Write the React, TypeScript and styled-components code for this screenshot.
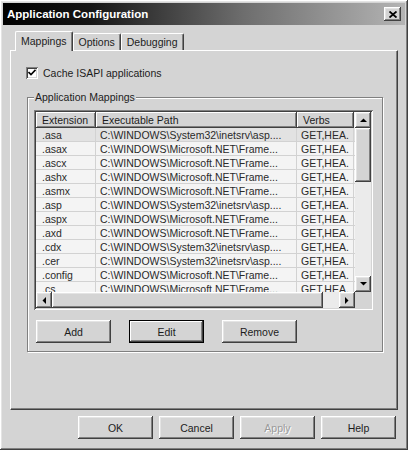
import React from 'react';
import styled, { createGlobalStyle, css } from 'styled-components';

const FACE = '#d4d4d4';

const GlobalStyle = createGlobalStyle`
  html, body {
    margin: 0;
    padding: 0;
    background: ${FACE};
  }
  body {
    font-family: "Liberation Sans", Arial, sans-serif;
    font-size: 10.5px;
    color: #1c1c1c;
  }
  * { box-sizing: border-box; }
`;

const raised = css`
  background: ${FACE};
  box-shadow: inset -1px -1px #404040, inset 1px 1px #ffffff,
    inset -2px -2px #808080, inset 2px 2px #e4e4e4;
`;

const Window = styled.div`
  width: 408px;
  height: 450px;
  padding: 3px;
  display: flex;
  flex-direction: column;
  ${raised};
`;

const TitleBar = styled.div`
  height: 22px;
  display: flex;
  align-items: center;
  padding: 0 4px 0 4px;
  background: linear-gradient(90deg, #000 0%, #161616 22%, #6e6e6e 60%, #b4b4b4 100%);
  color: #fff;
  font-weight: bold;
  font-size: 11.5px;
`;

const CloseButton = styled.div`
  margin-left: auto;
  width: 17px;
  height: 14px;
  display: flex;
  align-items: center;
  justify-content: center;
  ${raised};
`;

const Body = styled.div`
  padding: 6px 7px 0 7px;
  display: flex;
  flex-direction: column;
`;

const TabStrip = styled.div`
  height: 19px;
  display: flex;
  align-items: flex-end;
  padding-left: 5px;
  position: relative;
  z-index: 1;
`;

const Tab = styled.div<{ $active?: boolean }>`
  height: ${p => (p.$active ? 20 : 17)}px;
  margin-bottom: ${p => (p.$active ? -1 : 0)}px;
  padding: 0 ${p => (p.$active ? 5 : 5)}px;
  display: flex;
  align-items: center;
  padding-bottom: ${p => (p.$active ? 2 : 0)}px;
  background: ${FACE};
  border-top: 1px solid #fff;
  border-left: 1px solid #fff;
  border-right: 1px solid #404040;
  border-radius: 2px 2px 0 0;
  box-shadow: inset -1px 0 #808080;
`;

const Panel = styled.div`
  height: 360px;
  padding: 15px 14px 0 16px;
  border-top: 1px solid #fff;
  border-left: 1px solid #fff;
  border-right: 1px solid #404040;
  border-bottom: 1px solid #404040;
  box-shadow: inset -1px -1px #808080;
`;

const CheckRow = styled.label`
  display: flex;
  align-items: center;
  gap: 5px;
  height: 13px;
  margin-left: -1px;
`;

const CheckBox = styled.span`
  width: 12px;
  height: 12px;
  background: #fff;
  display: flex;
  align-items: center;
  justify-content: center;
  box-shadow: inset 1px 1px #808080, inset -1px -1px #fff,
    inset 2px 2px #404040, inset -2px -2px ${FACE};
`;

const Group = styled.fieldset`
  margin: 12px 0 0 0;
  padding: 7px 9px 8px 6px;
  border: 1px solid #808080;
  box-shadow: inset 1px 1px #fff, 1px 1px #fff;
`;

const GroupLabel = styled.legend`
  padding: 0 1px;
  background: ${FACE};
`;

const ListView = styled.div`
  height: 200px;
  padding: 2px;
  display: grid;
  grid-template-columns: 1fr 16px;
  grid-template-rows: 1fr 16px;
  background: #f4f4f4;
  box-shadow: inset 1px 1px #808080, inset -1px -1px #fff,
    inset 2px 2px #404040, inset -2px -2px ${FACE};
`;

const ListBody = styled.div`
  overflow: hidden;
`;

const COLS = '60px 201px 57px';

const HeaderRow = styled.div`
  display: grid;
  grid-template-columns: ${COLS};
  height: 16px;
`;

const HeaderCell = styled.div`
  padding-left: 6px;
  line-height: 16px;
  background: ${FACE};
  box-shadow: inset -1px -1px #404040, inset 1px 1px #ffffff, inset -2px -2px #808080;
`;

const Row = styled.div<{ $selected?: boolean }>`
  display: grid;
  grid-template-columns: ${COLS};
  height: 14px;
  border-bottom: 1px solid #d2d2d2;
  background: ${p => (p.$selected ? '#e2e2e2' : 'transparent')};
`;

const Cell = styled.div<{ $first?: boolean }>`
  padding-left: ${p => (p.$first ? 6 : 4)}px;
  line-height: 14px;
  white-space: nowrap;
  overflow: hidden;
  border-right: 1px solid #d2d2d2;
  color: #2a2a2a;
`;

const VScroll = styled.div`
  display: flex;
  flex-direction: column;
`;

const HScroll = styled.div`
  display: flex;
`;

const ScrollTrack = styled.div`
  flex: 1;
  background: #ebebeb;
`;

const ScrollButton = styled.div`
  width: 16px;
  height: 16px;
  flex: none;
  display: flex;
  align-items: center;
  justify-content: center;
  ${raised};
`;

const Thumb = styled.div<{ $size: number; $horizontal?: boolean }>`
  flex: none;
  ${p => (p.$horizontal ? `width: ${p.$size}px;` : `height: ${p.$size}px;`)}
  ${raised};
`;

const Corner = styled.div`
  background: ${FACE};
`;

const ButtonRow = styled.div`
  display: flex;
  gap: 18px;
  margin: 10px 0 0 2px;
`;

const Button = styled.div<{ $default?: boolean; $disabled?: boolean }>`
  width: 75px;
  height: 23px;
  display: flex;
  align-items: center;
  justify-content: center;
  ${raised};
  color: ${p => (p.$disabled ? '#9a9a9a' : '#1c1c1c')};
  text-shadow: ${p => (p.$disabled ? '1px 1px #fff' : 'none')};
  ${p =>
    p.$default &&
    css`
      box-shadow: inset 0 0 0 1px #000, inset -2px -2px #404040, inset 2px 2px #fff,
        inset -3px -3px #808080;
    `}
`;

const Footer = styled.div`
  display: flex;
  justify-content: flex-end;
  gap: 6px;
  margin-top: 6px;
  padding-right: 2px;
`;

const Arrow = ({ dir }: { dir: 'up' | 'down' | 'left' | 'right' }) => {
  const pts = {
    up: '0,4 7,4 3.5,0.5',
    down: '0,0 7,0 3.5,3.5',
    left: '4,0 4,7 0.5,3.5',
    right: '0,0 0,7 3.5,3.5',
  }[dir];
  const vertical = dir === 'up' || dir === 'down';
  return (
    <svg width={vertical ? 7 : 4} height={vertical ? 4 : 7} viewBox={vertical ? '0 0 7 4' : '0 0 4 7'}>
      <polygon points={pts} fill="#000" />
    </svg>
  );
};

const SYS = 'C:\\WINDOWS\\System32\\inetsrv\\asp....';
const NET = 'C:\\WINDOWS\\Microsoft.NET\\Frame...';

const mappings = [
  ['.asa', SYS],
  ['.asax', NET],
  ['.ascx', NET],
  ['.ashx', NET],
  ['.asmx', NET],
  ['.asp', SYS],
  ['.aspx', NET],
  ['.axd', NET],
  ['.cdx', SYS],
  ['.cer', SYS],
  ['.config', NET],
  ['.cs', NET],
];

export default function App() {
  return (
    <>
      <GlobalStyle />
      <Window>
        <TitleBar>
          Application Configuration
          <CloseButton>
            <svg width="8" height="7" viewBox="0 0 8 7">
              <path d="M0.5 0.5 L7.5 6.5 M7.5 0.5 L0.5 6.5" stroke="#000" strokeWidth="1.8" />
            </svg>
          </CloseButton>
        </TitleBar>
        <Body>
          <TabStrip>
            <Tab $active>Mappings</Tab>
            <Tab>Options</Tab>
            <Tab>Debugging</Tab>
          </TabStrip>
          <Panel>
            <CheckRow>
              <CheckBox>
                <svg width="8" height="7" viewBox="0 0 8 7">
                  <path d="M0.5 3 L3 5.5 L7.5 0.8" stroke="#000" strokeWidth="1.6" fill="none" />
                </svg>
              </CheckBox>
              Cache ISAPI applications
            </CheckRow>
            <Group>
              <GroupLabel>Application Mappings</GroupLabel>
              <ListView>
                <ListBody>
                  <HeaderRow>
                    <HeaderCell>Extension</HeaderCell>
                    <HeaderCell>Executable Path</HeaderCell>
                    <HeaderCell>Verbs</HeaderCell>
                  </HeaderRow>
                  {mappings.map(([ext, path], i) => (
                    <Row key={ext} $selected={i === 0}>
                      <Cell $first>{ext}</Cell>
                      <Cell>{path}</Cell>
                      <Cell>GET,HEA.</Cell>
                    </Row>
                  ))}
                </ListBody>
                <VScroll>
                  <ScrollButton><Arrow dir="up" /></ScrollButton>
                  <Thumb $size={54} />
                  <ScrollTrack />
                  <ScrollButton><Arrow dir="down" /></ScrollButton>
                </VScroll>
                <HScroll>
                  <ScrollButton><Arrow dir="left" /></ScrollButton>
                  <Thumb $horizontal $size={271} />
                  <ScrollTrack />
                  <ScrollButton><Arrow dir="right" /></ScrollButton>
                </HScroll>
                <Corner />
              </ListView>
              <ButtonRow>
                <Button>Add</Button>
                <Button $default>Edit</Button>
                <Button>Remove</Button>
              </ButtonRow>
            </Group>
          </Panel>
          <Footer>
            <Button>OK</Button>
            <Button>Cancel</Button>
            <Button $disabled>Apply</Button>
            <Button>Help</Button>
          </Footer>
        </Body>
      </Window>
    </>
  );
}
